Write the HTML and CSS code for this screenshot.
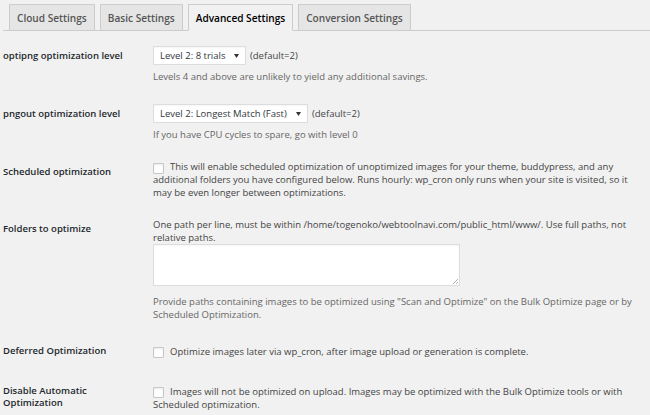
FILE: index.html
```html
<!DOCTYPE html>
<html>
<head>
<meta charset="utf-8">
<link rel="stylesheet" href="styles.css">
</head>
<body>
<div class="tabs">
  <a class="tab">Cloud Settings</a>
  <a class="tab">Basic Settings</a>
  <a class="tab active">Advanced Settings</a>
  <a class="tab">Conversion Settings</a>
</div>
<div class="form">
  <div class="row r1">
    <div class="label">optipng optimization level</div>
    <div class="field">
      <div class="line"><span class="select s1">Level 2: 8 trials<svg class="arrow" width="5" height="4" viewBox="0 0 5 4"><path d="M0 0H5L2.5 4Z" fill="#333"/></svg></span><span class="def">(default=2)</span></div>
      <p class="desc">Levels 4 and above are unlikely to yield any additional savings.</p>
    </div>
  </div>
  <div class="row r2">
    <div class="label">pngout optimization level</div>
    <div class="field">
      <div class="line"><span class="select s2">Level 2: Longest Match (Fast)<svg class="arrow" width="5" height="4" viewBox="0 0 5 4"><path d="M0 0H5L2.5 4Z" fill="#333"/></svg></span><span class="def">(default=2)</span></div>
      <p class="desc">If you have CPU cycles to spare, go with level 0</p>
    </div>
  </div>
  <div class="row r3">
    <div class="label">Scheduled optimization</div>
    <div class="field text"><span class="cb"></span>This will enable scheduled optimization of unoptimized images for your theme, buddypress, and any additional folders you have configured below. Runs hourly: wp_cron only runs when your site is visited, so it may be even longer between optimizations.</div>
  </div>
  <div class="row r4">
    <div class="label">Folders to optimize</div>
    <div class="field">
      <div class="text">One path per line, must be within /home/togenoko/webtoolnavi.com/public_html/www/. Use full paths, not relative paths.</div>
      <div class="textarea"><svg class="grip" width="6" height="6" viewBox="0 0 6 6"><path d="M6 1L1 6M6 4L4 6" stroke="#999" stroke-width="0.8"/></svg></div>
      <p class="desc">Provide paths containing images to be optimized using "Scan and Optimize" on the Bulk Optimize page or by Scheduled Optimization.</p>
    </div>
  </div>
  <div class="row r5">
    <div class="label">Deferred Optimization</div>
    <div class="field text"><span class="cb"></span>Optimize images later via wp_cron, after image upload or generation is complete.</div>
  </div>
  <div class="row r6">
    <div class="label">Disable Automatic Optimization</div>
    <div class="field text"><span class="cb"></span>Images will not be optimized on upload. Images may be optimized with the Bulk Optimize tools or with Scheduled optimization.</div>
  </div>
</div>
</body>
</html>
```
FILE: styles.css
```css
html, body {
  margin: 0;
  padding: 0;
  background: #f1f1f1;
}
body {
  font-family: "Open Sans", "Liberation Sans", sans-serif;
  color: #444;
  font-size: 9.5px;
  line-height: 13px;
  width: 650px;
  height: 415px;
  overflow: hidden;
}
.tabs {
  display: flex;
  gap: 5px;
  padding: 4px 0 0 6px;
  margin-left: 3px;
  border-bottom: 1px solid #ccc;
  box-sizing: border-box;
  height: 31px;
}
.tab {
  display: block;
  font-weight: 600;
  font-size: 10.1px;
  line-height: 26px;
  padding: 0 7px;
  background: #e5e5e5;
  border: 1px solid #ccc;
  border-bottom: none;
  color: #555;
}
.tab.active {
  background: #f1f1f1;
  color: #000;
  margin-bottom: -1px;
  border-bottom: 1px solid #f1f1f1;
}
.form {
  padding-left: 3px;
}
.row {
  display: grid;
  grid-template-columns: 150px 487px;
}
.label {
  font-weight: 600;
  color: #23282d;
  line-height: 12px;
  padding-right: 14px;
}
.line {
  display: flex;
  align-items: center;
  gap: 4px;
}
.select {
  display: flex;
  align-items: center;
  justify-content: space-between;
  box-sizing: border-box;
  height: 19px;
  background: #fff;
  border: 1px solid #ddd;
  box-shadow: inset 0 1px 2px rgba(0,0,0,0.04);
  padding: 0 6px 0 6px;
  color: #32373c;
}
.s1 { width: 93px; }
.s2 { width: 155px; }
.arrow { display: block; }
.def { color: #444; }
.desc {
  margin: 5px 0 0;
  color: #666;
}
.text { color: #444; }
.cb {
  display: inline-block;
  width: 9px;
  height: 9px;
  background: #fff;
  border: 1px solid #c6c6c6;
  box-shadow: inset 0 1px 2px rgba(0,0,0,0.08);
  margin-bottom: -3.5px;
  margin-right: 6px;
  border-radius: 1px;
}
.textarea {
  position: relative;
  width: 307px;
  height: 42px;
  box-sizing: border-box;
  background: #fff;
  border: 1px solid #ddd;
  box-shadow: inset 0 1px 2px rgba(0,0,0,0.04);
}
.r4 .desc { margin-top: 9px; }
.grip {
  position: absolute;
  right: 1px;
  bottom: 1px;
}
.r1 { padding-top: 15px; }
.r1 .label { padding-top: 4px; }
.r2 { padding-top: 21px; }
.r2 .label { padding-top: 4px; }
.r3 { padding-top: 19px; }
.r3 .label { padding-top: 5.5px; }
.r4 { padding-top: 18.5px; }
.r4 .label { padding-top: 5.5px; }
.r5 { padding-top: 24px; }
.r5 .label { padding-top: 0.5px; }
.r6 { padding-top: 27px; }
.r6 .label { padding-top: 0.5px; }
```
